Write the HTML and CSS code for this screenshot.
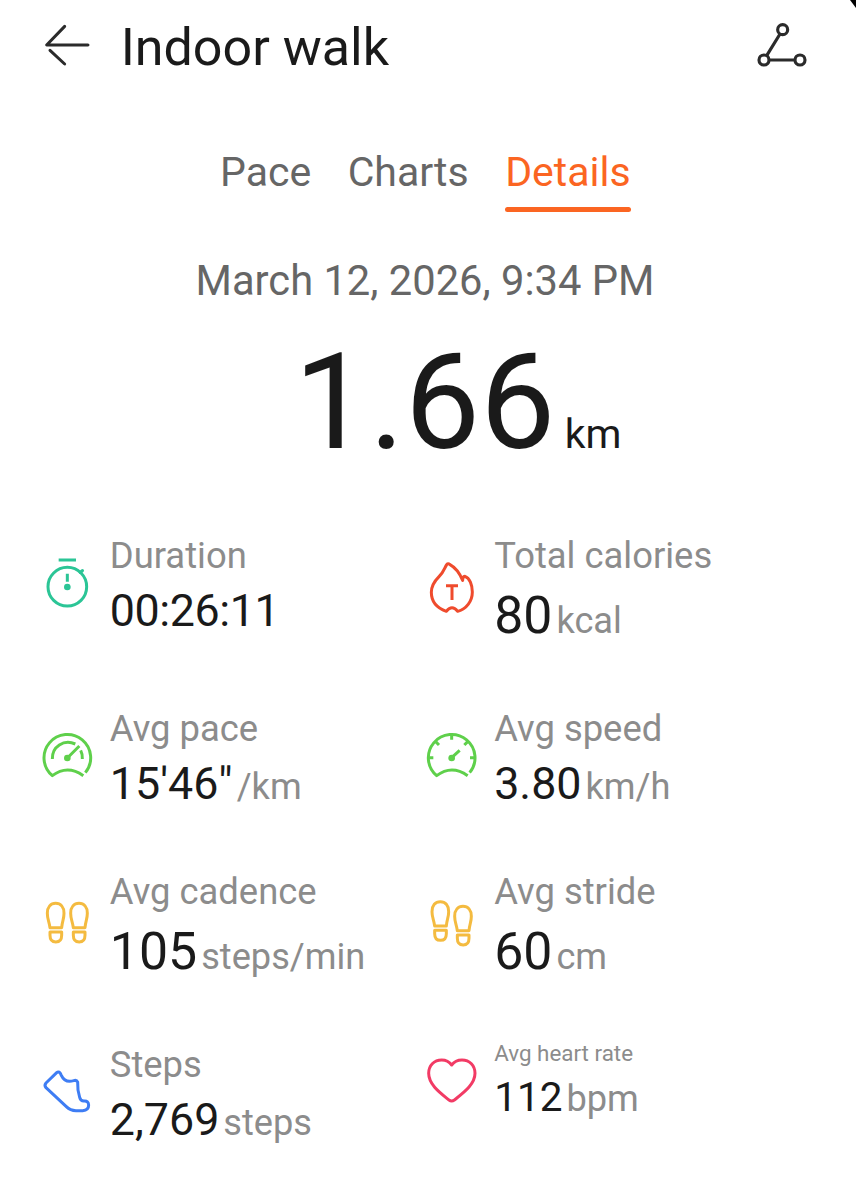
FILE: index.html
```html
<!DOCTYPE html>
<html lang="en">
<head>
<meta charset="utf-8">
<title>Indoor walk</title>
<link rel="stylesheet" href="styles.css">
</head>
<body>
<div class="screen">
  <span class="screen-corner"></span>
  <header class="topbar">
    <svg class="back" viewBox="42 69 140 132">
      <path d="M174 135H50L104 79M60 151L104 192"/>
    </svg>
    <h1 class="title">Indoor walk</h1>
    <svg class="route" viewBox="48 66 156 138">
      <circle cx="128" cy="89" r="15"/><circle cx="72" cy="180" r="15"/><circle cx="180" cy="180" r="15"/>
      <path d="M120 102L80 167M87 180H165"/>
    </svg>
  </header>

  <nav class="tabs">
    <a class="tab">Pace</a>
    <a class="tab">Charts</a>
    <a class="tab active">Details</a>
  </nav>

  <p class="date">March 12, 2026, 9:34 PM</p>
  <p class="distance"><span class="distance-value">1.66</span><span class="distance-unit">km</span></p>

  <main class="metrics">
    <section class="metric">
      <svg class="icon teal" viewBox="27 12 168 300">
        <circle cx="112" cy="170" r="58"/>
        <path d="M86 90H138M112 131V155"/>
        <path d="M151 127L157 122" stroke-width="10" stroke-linecap="round"/>
        <circle class="solid" cx="112" cy="171" r="10"/>
      </svg>
      <div>
        <div class="label">Duration</div>
        <div class="reading"><span class="value time">00:26:11</span></div>
      </div>
    </section>
    <section class="metric">
      <svg class="icon red" viewBox="26 12 168 300">
        <path d="M93 244C64 234 48 213 48 187C48 167 57 154 71 140C86 126 87 115 94 104Q98 99 104 104C119 112 132 128 142 151Q141 140 149 139C163 144 171 165 171 186C171 213 154 236 127 244Q110 223 93 244Z"/>
        <path d="M92 167H128M110 167V210"/>
      </svg>
      <div>
        <div class="label">Total calories</div>
        <div class="reading large"><span class="value">80</span><span class="unit">kcal</span></div>
      </div>
    </section>

    <section class="metric">
      <svg class="icon green" viewBox="27 21 168 300">
        <path d="M160 227Q112 193 67 227A70 70 0 1 1 166 218"/>
        <path d="M67 177C66 140 101 117 136 132M152 151Q158 163 157 177M112 174L148 138"/>
        <circle class="solid" cx="112" cy="174" r="10"/>
      </svg>
      <div>
        <div class="label">Avg pace</div>
        <div class="reading"><span class="value">15'46"</span><span class="unit">/km</span></div>
      </div>
    </section>
    <section class="metric">
      <svg class="icon green" viewBox="26 21 168 300">
        <path d="M157 227Q109 193 64 227A70 70 0 1 1 163 218"/>
        <path d="M109 104V119M40 173H54M164 173H178M61 125L71 135M157 125L147 135M109 173L133 151"/>
        <circle class="solid" cx="109" cy="174" r="10"/>
      </svg>
      <div>
        <div class="label">Avg speed</div>
        <div class="reading"><span class="value">3.80</span><span class="unit">km/h</span></div>
      </div>
    </section>

    <section class="metric">
      <svg class="icon amber" viewBox="27 0 168 300">
        <g id="foot">
          <path d="M60 173C57 152 52 147 52 130C52 111 62 100 77 100C92 100 102 111 102 130C102 147 97 152 95 173Z"/>
          <path d="M60 186H95V196C95 209 88 216 77.500 216C67 216 60 209 60 196Z"/>
        </g>
        <use href="#foot" x="70"/>
      </svg>
      <div>
        <div class="label">Avg cadence</div>
        <div class="reading large"><span class="value">105</span><span class="unit">steps/min</span></div>
      </div>
    </section>
    <section class="metric">
      <svg class="icon amber" viewBox="26 0 168 300">
        <use href="#foot" x="-2" y="-5"/>
        <use href="#foot" x="66" y="9"/>
      </svg>
      <div>
        <div class="label">Avg stride</div>
        <div class="reading large"><span class="value">60</span><span class="unit">cm</span></div>
      </div>
    </section>

    <section class="metric">
      <svg class="icon blue" viewBox="27 24 168 300">
        <path d="M80 113L48 144Q42 151 48 158L109 215Q121 227 138 227H158Q176 226 176 210Q175 197 163 198Q152 199 149 187Q142 165 143 141Q140 134 131 137Q105 145 94 121Q88 106 80 113Z"/>
      </svg>
      <div>
        <div class="label">Steps</div>
        <div class="reading"><span class="value">2,769</span><span class="unit">steps</span></div>
      </div>
    </section>
    <section class="metric compact">
      <svg class="icon pink" viewBox="26 24 168 300">
        <path d="M109 90C101 79 91 75 79 75C56 75 40 92 40 115C40 149 75 174 101 195Q109 201 117 195C143 174 179 149 179 115C179 92 163 75 140 75C128 75 117 79 109 90Z"/>
      </svg>
      <div>
        <div class="label">Avg heart rate</div>
        <div class="reading"><span class="value">112</span><span class="unit">bpm</span></div>
      </div>
    </section>
  </main>
</div>
</body>
</html>
```
FILE: styles.css
```css
* { box-sizing: border-box; }

body {
  margin: 0;
  background: #fff;
  color: #1a1a1a;
  font-family: Roboto, "Liberation Sans", sans-serif;
}

.screen {
  position: relative;
  width: 856px;
  height: 1200px;
  overflow: hidden;
}

.screen-corner {
  position: absolute;
  top: 0;
  right: 0;
  width: 6px;
  height: 8px;
  background: #000;
  clip-path: polygon(0 0, 100% 0, 100% 100%);
}

.topbar {
  display: flex;
  align-items: flex-start;
  height: 140px;
  padding: 0 48px 0 44px;
}

.back, .route {
  fill: none;
  stroke: #2b2b2b;
  flex: none;
}

.back {
  width: 46.67px;
  height: 44px;
  margin-top: 23px;
  stroke-width: 9;
  stroke-linecap: round;
  stroke-linejoin: round;
}

.route {
  width: 52px;
  height: 46px;
  margin: 22px 0 0 auto;
  stroke-width: 9.5;
}

.title {
  margin: 18px 0 0 30px;
  font-size: 52px;
  font-weight: 400;
  line-height: 60px;
}

.tabs {
  display: flex;
  gap: 36.5px;
  padding-left: 220px;
  height: 112px;
}

.tab {
  height: 72px;
  padding-top: 8px;
  font-size: 41px;
  line-height: 48px;
  color: #666;
}

.tab.active {
  position: relative;
  color: #fb6522;
}

.tab.active::after {
  content: "";
  position: absolute;
  left: 0;
  right: 0;
  bottom: 0.5px;
  height: 5px;
  border-radius: 3px;
  background: #fb6522;
}

.date {
  margin: 5px 0 0 195.5px;
  font-size: 41.7px;
  line-height: 48px;
  color: #666;
}

.distance {
  display: flex;
  align-items: baseline;
  gap: 9.5px;
  height: 211px;
  margin: 18px 0 0 294px;
}

.distance-value {
  font-size: 134px;
  line-height: 160px;
}

.distance-unit { font-size: 41px; }

.metrics {
  display: grid;
  grid-template-columns: 385px 1fr;
  grid-template-rows: 173px 163px 173px 157px;
  padding-left: 39px;
}

.metric {
  display: flex;
  align-items: flex-start;
  gap: 14.8px;
}

.metric:nth-child(even) { gap: 14.2px; }

.icon {
  flex: none;
  width: 56px;
  height: 100px;
  fill: none;
  stroke: currentColor;
  stroke-width: 9;
  stroke-linejoin: round;
}

.icon .solid { fill: currentColor; stroke: none; }

.teal { color: #2bc596; }
.red { color: #ef4b2d; }
.green { color: #5fd04b; }
.amber { color: #f4bb40; }
.blue { color: #3e7df4; }
.pink { color: #f23b65; }

.label {
  padding-top: 1px;
  font-size: 36.4px;
  line-height: 42px;
  color: #8c8c8c;
  white-space: nowrap;
}

.reading {
  display: flex;
  align-items: baseline;
  gap: 4px;
  margin-top: 8px;
}

.value { font-size: 44.8px; line-height: 52px; }
.value.time { letter-spacing: -0.4px; }
.unit { font-size: 36.2px; line-height: 42px; color: #8c8c8c; }

.large { margin-top: 13px; }
.large .value { font-size: 51.8px; }

.compact .label { padding-top: 0; font-size: 22.4px; line-height: 21px; }
.compact .reading { margin-top: 7px; }
.compact .value { font-size: 40.5px; }
```
